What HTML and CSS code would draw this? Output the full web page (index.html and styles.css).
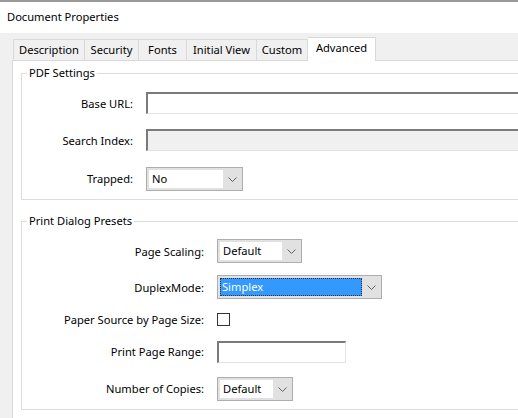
FILE: index.html
```html
<!DOCTYPE html>
<html>
<head>
<meta charset="utf-8">
<link rel="stylesheet" href="styles.css">
</head>
<body>
<div class="titlebar">Document Properties</div>
<div class="tabs">
  <div class="tab w-desc">Description</div>
  <div class="tab w-sec">Security</div>
  <div class="tab w-fonts">Fonts</div>
  <div class="tab w-iv">Initial View</div>
  <div class="tab w-cust">Custom</div>
  <div class="tab active w-adv">Advanced</div>
</div>
<div class="panel">
  <fieldset class="group g1">
    <legend>PDF Settings</legend>
    <div class="form f1">
      <div class="lbl">Base URL:</div>
      <div class="text wide"></div>
      <div class="lbl">Search Index:</div>
      <div class="text wide disabled"></div>
      <div class="lbl">Trapped:</div>
      <div class="select end s-trapped"><span class="val">No</span><span class="arrow"><svg width="9" height="5" viewBox="0 0 9 5"><path d="M0.5 0.5 L4.5 4.5 L8.5 0.5" fill="none" stroke="#606060" stroke-width="1"/></svg></span></div>
    </div>
  </fieldset>
  <fieldset class="group g2">
    <legend>Print Dialog Presets</legend>
    <div class="form f2">
      <div class="lbl">Page Scaling:</div>
      <div class="select s-scale"><span class="val">Default</span><span class="arrow"><svg width="9" height="5" viewBox="0 0 9 5"><path d="M0.5 0.5 L4.5 4.5 L8.5 0.5" fill="none" stroke="#606060" stroke-width="1"/></svg></span></div>
      <div class="lbl">DuplexMode:</div>
      <div class="select s-duplex"><span class="val sel">Simplex</span><span class="arrow"><svg width="9" height="5" viewBox="0 0 9 5"><path d="M0.5 0.5 L4.5 4.5 L8.5 0.5" fill="none" stroke="#606060" stroke-width="1"/></svg></span></div>
      <div class="lbl">Paper Source by Page Size:</div>
      <div class="check"></div>
      <div class="lbl">Print Page Range:</div>
      <div class="text end range"></div>
      <div class="lbl">Number of Copies:</div>
      <div class="select end s-copies"><span class="val">Default</span><span class="arrow"><svg width="9" height="5" viewBox="0 0 9 5"><path d="M0.5 0.5 L4.5 4.5 L8.5 0.5" fill="none" stroke="#606060" stroke-width="1"/></svg></span></div>
    </div>
  </fieldset>
</div>
</body>
</html>
```
FILE: styles.css
```css
html, body {
  margin: 0;
  padding: 0;
  width: 518px;
  height: 418px;
  overflow: hidden;
}
body {
  background: #f0f0f0;
  font-family: "Segoe UI", "Noto Sans", sans-serif;
  font-size: 11.15px;
  color: #000;
}
.titlebar {
  height: 31px;
  line-height: 30px;
  border-top: 2px solid #9a9a9a;
  background: #fff;
  padding-left: 7px;
}
.tabs {
  display: flex;
  align-items: flex-end;
  height: 27px;
  padding-left: 13px;
}
.tab {
  box-sizing: border-box;
  height: 21px;
  line-height: 20px;
  text-align: center;
  border-top: 1px solid #d9d9d9;
  border-left: 1px solid #d9d9d9;
  background: #f0f0f0;
}
.w-desc { width: 71px; }
.w-sec { width: 54px; }
.w-fonts { width: 48px; }
.w-iv { width: 70px; }
.w-cust { width: 52px; border-right: 1px solid #d9d9d9; }
.tab.active {
  width: 68px;
  height: 24px;
  line-height: 19px;
  background: #fff;
  border-left: none;
  border-right: 1px solid #d9d9d9;
  margin-bottom: -1px;
  position: relative;
  z-index: 1;
}
.panel {
  box-sizing: border-box;
  margin-left: 12px;
  height: 358px;
  background: #fff;
  border-top: 1px solid #d9d9d9;
  border-left: 1px solid #d9d9d9;
  padding-left: 8px;
}
.group {
  margin: 0;
  padding: 0;
  border: 1px solid #dcdcdc;
  border-right: none;
  min-width: 0;
  box-sizing: border-box;
}
.group legend {
  line-height: 16px;
  padding: 0 2px;
  margin-left: 5px;
}
.g1 {
  margin-top: 4px;
  padding: 11px 0 8px 0;
}
.g2 {
  margin-top: 13px;
  padding: 10px 0 8px 0;
}
.form {
  display: grid;
  column-gap: 13px;
  row-gap: 15px;
}
.f1 {
  grid-template-columns: 111px 1fr;
  grid-template-rows: 22px 22px 25px;
}
.f2 {
  grid-template-columns: 182px 1fr;
  grid-template-rows: 24px 24px 16px 24px 26px;
  row-gap: 12px;
}
.lbl {
  display: flex;
  align-items: center;
  justify-content: flex-end;
  white-space: nowrap;
}
.end { align-self: end; }
.text {
  box-sizing: border-box;
  height: 22px;
  border-top: 2px solid #7a7a7a;
  border-left: 2px solid #7a7a7a;
  border-right: 1px solid #e3e3e3;
  border-bottom: 1px solid #e3e3e3;
  background: #fff;
}
.wide { border-right: none; }
.disabled { background: #f0f0f0; }
.range { width: 129px; }
.select {
  box-sizing: border-box;
  height: 24px;
  border: 1px solid #adadad;
  background: #e1e1e1;
  display: flex;
  align-items: stretch;
}
.select .val {
  flex: 1;
  margin: 2px 0 2px 2px;
  background: #fff;
  padding-left: 3px;
  line-height: 18px;
  white-space: nowrap;
}
.select .val.sel {
  background: #3399ff;
  color: #fff;
  outline: 1px dotted #333;
  outline-offset: -1px;
  padding-left: 2px;
}
.select .arrow {
  width: 19px;
  display: flex;
  align-items: center;
  justify-content: center;
}
.select .arrow svg { display: block; }
.s-trapped { width: 97px; }
.s-scale { width: 85px; }
.s-duplex { width: 165px; }
.s-copies { width: 76px; }
.check {
  box-sizing: border-box;
  width: 13px;
  height: 13px;
  border: 1px solid #333;
  background: #fff;
  align-self: center;
}
```
